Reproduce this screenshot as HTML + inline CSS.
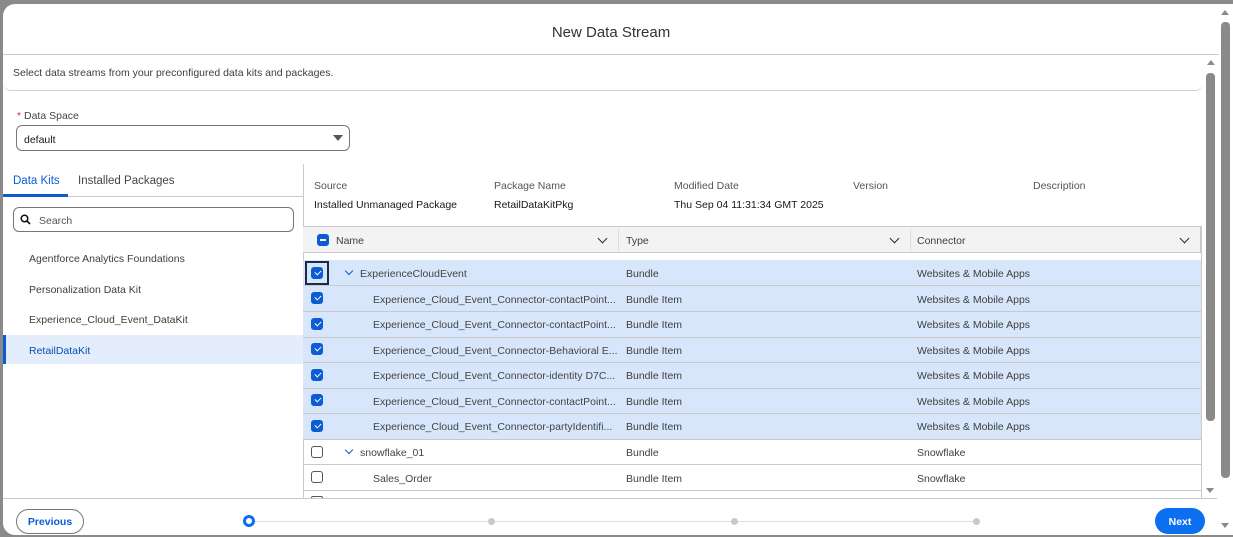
<!DOCTYPE html>
<html><head><meta charset="utf-8"><style>
*{box-sizing:border-box;margin:0;padding:0}
body{width:1233px;height:537px;background:#8a8a8a;position:relative;overflow:hidden;font-family:"Liberation Sans",sans-serif;font-size:10.5px;color:#3e3e3c}
.a{position:absolute}
.modal{left:3px;top:4px;width:1216px;height:531px;background:#fff;border-radius:12px 0 0 12px;overflow:hidden}
.cb{position:absolute;width:12px;height:12px;border-radius:3px;background:#0b5cd5;border:1px solid #0b5cd5}
.cb::after{content:"";position:absolute;left:3px;top:2px;width:5px;height:3px;border-left:1.3px solid #fff;border-bottom:1.3px solid #fff;transform:rotate(-45deg)}
.cbo{position:absolute;width:12px;height:12px;border-radius:3px;background:#fff;border:1px solid #555}
.row{position:absolute;left:303px;width:898px;border-bottom:1px solid #c9c9c9}
.sel{background:#d8e6fb}
.t{position:absolute;white-space:nowrap;line-height:12px}
.chev{position:absolute;width:6px;height:6px;border-right:1.3px solid #0b5cd5;border-bottom:1.3px solid #0b5cd5;transform:rotate(45deg)}
.hchev{position:absolute;width:7px;height:7px;border-right:1.5px solid #1b2b48;border-bottom:1.5px solid #1b2b48;transform:rotate(45deg)}
</style></head><body>
<div class="a modal">
 <div class="t" style="left:0;width:1216px;text-align:center;top:21px;font-size:15px;line-height:16px;color:#333">New Data Stream</div>
 <div class="a" style="left:0;top:50px;width:1216px;height:1px;background:#c9c9c9"></div>
 <div class="a" style="left:0;top:51px;width:1200px;height:36px;border-bottom:1px solid #d0d0d0;border-radius:0 0 8px 8px"></div>
 <div class="t" style="left:10px;top:63px;color:#3e3e3c">Select data streams from your preconfigured data kits and packages.</div>
 <div class="t" style="left:14px;top:106px;color:#444"><span style="color:#c23934">*</span> Data Space</div>
 <div class="a" style="left:13px;top:121px;width:334px;height:26px;border:1px solid #777;border-radius:6px"></div>
 <div class="t" style="left:21px;top:130px;color:#181818">default</div>
 <div class="a" style="left:330px;top:131px;width:0;height:0;border-left:5px solid transparent;border-right:5px solid transparent;border-top:6px solid #555"></div>
 <div class="t" style="left:10px;top:171px;font-size:11.5px;color:#0b5cd5">Data Kits</div>
 <div class="t" style="left:75px;top:171px;font-size:11.5px;color:#444">Installed Packages</div>
 <div class="a" style="left:0;top:192px;width:300px;height:1px;background:#c9c9c9"></div>
 <div class="a" style="left:0;top:190px;width:65px;height:3px;background:#0b5cd5"></div>
 <div class="a" style="left:10px;top:203px;width:281px;height:25px;border:1px solid #777;border-radius:6px"></div>
 <svg class="a" style="left:17px;top:210px" width="11" height="11" viewBox="0 0 11 11"><circle cx="4.5" cy="4.5" r="3.3" fill="none" stroke="#111" stroke-width="1.5"/><path d="M7 7L10 10" stroke="#111" stroke-width="1.7"/></svg>
 <div class="t" style="left:36px;top:211px;color:#555">Search</div>
 <div class="t" style="left:26px;top:249px">Agentforce Analytics Foundations</div>
 <div class="t" style="left:26px;top:280px">Personalization Data Kit</div>
 <div class="t" style="left:26px;top:310px">Experience_Cloud_Event_DataKit</div>
 <div class="a" style="left:0;top:331px;width:300px;height:29px;background:#e3edfb"></div>
 <div class="a" style="left:0;top:331px;width:3px;height:29px;background:#0b5cd5"></div>
 <div class="t" style="left:26px;top:341px;color:#0b4fb3">RetailDataKit</div>
 <div class="a" style="left:300px;top:160px;width:1px;height:335px;background:#c9c9c9"></div>
</div>
<div class="t" style="left:314px;top:180px;color:#555">Source</div>
<div class="t" style="left:494px;top:180px;color:#555">Package Name</div>
<div class="t" style="left:674px;top:180px;color:#555">Modified Date</div>
<div class="t" style="left:853px;top:180px;color:#555">Version</div>
<div class="t" style="left:1033px;top:180px;color:#555">Description</div>
<div class="t" style="left:314px;top:199px;color:#181818">Installed Unmanaged Package</div>
<div class="t" style="left:494px;top:199px;color:#181818">RetailDataKitPkg</div>
<div class="t" style="left:674px;top:199px;color:#181818">Thu Sep 04 11:31:34 GMT 2025</div>
<div class="a" style="left:303px;top:226px;width:898px;height:27px;background:#f3f3f3;border-top:1px solid #c9c9c9;border-bottom:1px solid #c9c9c9;border-right:1px solid #c9c9c9"></div>
<div class="a" style="left:317px;top:234px;width:12px;height:12px;border-radius:3px;background:#0b5cd5"></div>
<div class="a" style="left:320px;top:239px;width:6px;height:2px;background:#fff"></div>
<div class="t" style="left:336px;top:235px;color:#3e3e3c">Name</div>
<div class="hchev" style="left:599px;top:235px"></div>
<div class="a" style="left:618px;top:229px;width:1px;height:22px;background:#ddd"></div>
<div class="t" style="left:626px;top:235px">Type</div>
<div class="hchev" style="left:891px;top:235px"></div>
<div class="a" style="left:910px;top:229px;width:1px;height:22px;background:#ddd"></div>
<div class="t" style="left:917px;top:235px">Connector</div>
<div class="hchev" style="left:1181px;top:235px"></div>

<div class="row sel" style="top:260px;height:26px"></div>
<div class="a" style="left:305px;top:261px;width:24px;height:24px;border:2px solid #1b2b48"></div>
<div class="cb" style="left:311px;top:267px"></div>
<div class="chev" style="left:346px;top:268px"></div>
<div class="t" style="left:360px;top:268px;color:#444">ExperienceCloudEvent</div>
<div class="t" style="left:626px;top:268px">Bundle</div>
<div class="t" style="left:917px;top:268px">Websites &amp; Mobile Apps</div>

<div class="row sel" style="top:286px;height:26px"></div><div class="cb" style="left:311px;top:292px"></div>
<div class="t" style="left:373px;top:294px;color:#444">Experience_Cloud_Event_Connector-contactPoint...</div><div class="t" style="left:626px;top:294px">Bundle Item</div><div class="t" style="left:917px;top:294px">Websites &amp; Mobile Apps</div>
<div class="row sel" style="top:312px;height:26px"></div><div class="cb" style="left:311px;top:318px"></div>
<div class="t" style="left:373px;top:319px;color:#444">Experience_Cloud_Event_Connector-contactPoint...</div><div class="t" style="left:626px;top:319px">Bundle Item</div><div class="t" style="left:917px;top:319px">Websites &amp; Mobile Apps</div>
<div class="row sel" style="top:338px;height:25px"></div><div class="cb" style="left:311px;top:343px"></div>
<div class="t" style="left:373px;top:345px;color:#444">Experience_Cloud_Event_Connector-Behavioral E...</div><div class="t" style="left:626px;top:345px">Bundle Item</div><div class="t" style="left:917px;top:345px">Websites &amp; Mobile Apps</div>
<div class="row sel" style="top:363px;height:26px"></div><div class="cb" style="left:311px;top:369px"></div>
<div class="t" style="left:373px;top:370px;color:#444">Experience_Cloud_Event_Connector-identity D7C...</div><div class="t" style="left:626px;top:370px">Bundle Item</div><div class="t" style="left:917px;top:370px">Websites &amp; Mobile Apps</div>
<div class="row sel" style="top:389px;height:25px"></div><div class="cb" style="left:311px;top:394px"></div>
<div class="t" style="left:373px;top:396px;color:#444">Experience_Cloud_Event_Connector-contactPoint...</div><div class="t" style="left:626px;top:396px">Bundle Item</div><div class="t" style="left:917px;top:396px">Websites &amp; Mobile Apps</div>
<div class="row sel" style="top:414px;height:26px"></div><div class="cb" style="left:311px;top:420px"></div>
<div class="t" style="left:373px;top:421px;color:#444">Experience_Cloud_Event_Connector-partyIdentifi...</div><div class="t" style="left:626px;top:421px">Bundle Item</div><div class="t" style="left:917px;top:421px">Websites &amp; Mobile Apps</div>
<div class="row" style="top:440px;height:25px"></div><div class="cbo" style="left:311px;top:446px"></div>
<div class="chev" style="left:346px;top:447px"></div>
<div class="t" style="left:360px;top:447px;color:#444">snowflake_01</div><div class="t" style="left:626px;top:447px">Bundle</div><div class="t" style="left:917px;top:447px">Snowflake</div>
<div class="row" style="top:465px;height:26px"></div><div class="cbo" style="left:311px;top:471px"></div>
<div class="t" style="left:373px;top:473px;color:#444">Sales_Order</div><div class="t" style="left:626px;top:473px">Bundle Item</div><div class="t" style="left:917px;top:473px">Snowflake</div>
<div class="cbo" style="left:311px;top:496px;height:2px;border-bottom:none;border-radius:3px 3px 0 0"></div>
<div class="a" style="left:1201px;top:226px;width:1px;height:272px;background:#c9c9c9"></div>
<div class="a" style="left:1207px;top:60px;width:0;height:0;border-left:4px solid transparent;border-right:4px solid transparent;border-bottom:5px solid #8a8a8a"></div>
<div class="a" style="left:1206px;top:73px;width:9px;height:348px;background:#8a8a8a;border-radius:4px"></div>
<div class="a" style="left:1206px;top:488px;width:0;height:0;border-left:4px solid transparent;border-right:4px solid transparent;border-top:5px solid #8a8a8a"></div>
<div class="a" style="left:3px;top:498px;width:1214px;height:1px;background:#c9c9c9"></div>
<div class="a" style="left:16px;top:509px;width:68px;height:25px;border:1px solid #777;border-radius:13px;background:#fff"></div>
<div class="t" style="left:16px;width:68px;text-align:center;top:516px;font-weight:bold;color:#0b5cd5">Previous</div>
<div class="a" style="left:250px;top:521px;width:728px;height:1px;background:#ddd"></div>
<div class="a" style="left:243px;top:515px;width:12px;height:12px;border-radius:50%;border:3px solid #0b6ff0;background:#fff"></div>
<div class="a" style="left:488px;top:518px;width:7px;height:7px;border-radius:50%;background:#c9c9c9"></div>
<div class="a" style="left:731px;top:518px;width:7px;height:7px;border-radius:50%;background:#c9c9c9"></div>
<div class="a" style="left:973px;top:518px;width:7px;height:7px;border-radius:50%;background:#c9c9c9"></div>
<div class="a" style="left:1155px;top:508px;width:50px;height:26px;border-radius:13px;background:#0b6ff0"></div>
<div class="t" style="left:1155px;width:50px;text-align:center;top:516px;font-weight:bold;color:#fff">Next</div>
<div class="a" style="left:1219px;top:4px;width:14px;height:531px;background:#fff"></div>
<div class="a" style="left:1221px;top:10px;width:0;height:0;border-left:4px solid transparent;border-right:4px solid transparent;border-bottom:5px solid #8a8a8a"></div>
<div class="a" style="left:1221px;top:22px;width:9px;height:456px;background:#8a8a8a;border-radius:4px"></div>
<div class="a" style="left:1221px;top:523px;width:0;height:0;border-left:4px solid transparent;border-right:4px solid transparent;border-top:5px solid #8a8a8a"></div>
</body></html>
